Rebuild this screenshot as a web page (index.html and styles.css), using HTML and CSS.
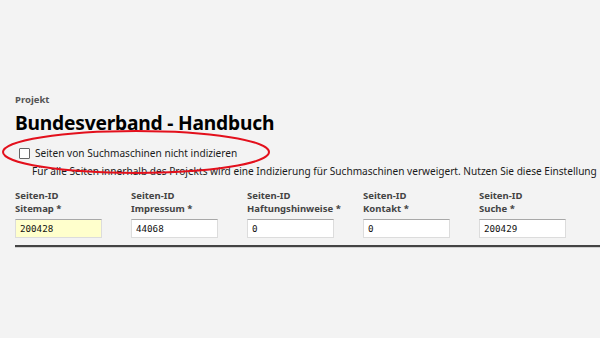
FILE: index.html
```html
<!DOCTYPE html>
<html lang="de">
<head>
    <meta charset="UTF-8">
    <title>Projekt - Bundesverband - Handbuch</title>
    <link rel="stylesheet" href="styles.css">
</head>
<body>
    <div class="page">
        <div class="kicker">Projekt</div>
        <h1 class="title">Bundesverband - Handbuch</h1>

        <label class="check-row">
            <input type="checkbox" class="check">
            <span>Seiten von Suchmaschinen nicht indizieren</span>
        </label>
        <p class="hint">Für alle Seiten innerhalb des Projekts wird eine Indizierung für Suchmaschinen verweigert. Nutzen Sie diese Einstellung</p>

        <div class="fields">
            <div class="field">
                <label>Seiten-ID<br>Sitemap *</label>
                <input type="text" class="active" value="200428">
            </div>
            <div class="field">
                <label>Seiten-ID<br>Impressum *</label>
                <input type="text" value="44068">
            </div>
            <div class="field">
                <label>Seiten-ID<br>Haftungshinweise *</label>
                <input type="text" value="0">
            </div>
            <div class="field">
                <label>Seiten-ID<br>Kontakt *</label>
                <input type="text" value="0">
            </div>
            <div class="field">
                <label>Seiten-ID<br>Suche *</label>
                <input type="text" value="200429">
            </div>
        </div>

        <div class="rule"></div>

        <!-- red marker drawn over the checkbox row -->
        <svg class="marker" width="300" height="60" viewBox="0 0 300 60">
            <ellipse cx="136" cy="27" rx="133" ry="21" fill="none" stroke="#e3101c" stroke-width="2"/>
        </svg>
    </div>
</body>
</html>
```

FILE: styles.css
```css
body {
    margin: 0;
    background-color: #f3f3f3;
    font-family: "Noto Sans", "Open Sans", sans-serif;
    color: #1a1a1a;
    overflow: hidden;
}
.page {
    position: relative;
    padding: 94px 0 0 15px;
    height: 338px;
    box-sizing: border-box;
}
.kicker {
    font-size: 9.5px;
    font-weight: bold;
    color: #555;
    line-height: 12px;
}
.title {
    margin: 5px 0 0;
    font-size: 19.2px;
    font-weight: bold;
    color: #000;
    line-height: 24px;
    letter-spacing: -0.2px;
}
.check-row {
    display: flex;
    align-items: center;
    gap: 5px;
    margin: 11px 0 0 4px;
    font-size: 10.1px;
    line-height: 14px;
    color: #1a1a1a;
}
.check {
    appearance: none;
    width: 11px;
    height: 11px;
    margin: 0;
    border: 1px solid #666;
    border-radius: 1px;
    background-color: #fff;
}
.hint {
    margin: 4px 0 0 17px;
    font-size: 10.1px;
    line-height: 14px;
    white-space: nowrap;
    color: #1a1a1a;
}
.fields {
    display: flex;
    gap: 30px;
    margin-top: 11px;
}
.field {
    display: flex;
    flex-direction: column;
    width: 86px;
}
.field label {
    font-size: 9.5px;
    font-weight: bold;
    color: #444;
    line-height: 13px;
    white-space: nowrap;
}
.field input {
    margin-top: 4px;
    width: 87px;
    height: 19px;
    box-sizing: border-box;
    padding: 0 4px;
    border: 1px solid #dcdcdc;
    border-top-color: #a8a8a8;
    background-color: #fff;
    font-family: "DejaVu Sans Mono", monospace;
    font-size: 9.2px;
    color: #111;
    outline: none;
}
.field input.active {
    background-color: #ffffcc;
}
.rule {
    margin-top: 7px;
    border-top: 2px solid #444;
    border-bottom: 1px solid #d0d0d0;
}
.marker {
    position: absolute;
    left: 0;
    top: 125px;
}
```
